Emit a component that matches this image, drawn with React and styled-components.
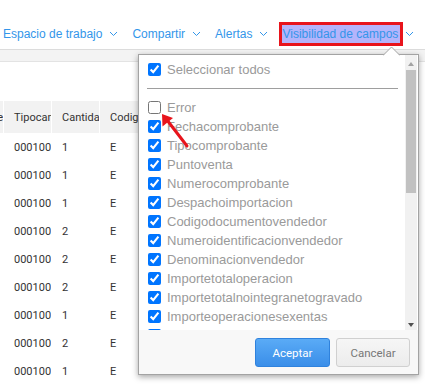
import React from 'react';
import styled, { createGlobalStyle } from 'styled-components';

const GlobalStyle = createGlobalStyle`
  body {
    margin: 0;
    background: #fff;
    font-family: Roboto, "Liberation Sans", sans-serif;
  }
`;

const navItems = ['Espacio de trabajo', 'Compartir', 'Alertas', 'Visibilidad de campos'];

const rows = [1, 1, 1, 2, 2, 2, 1, 2, 1];

const fields = [
    'Fechacomprobante',
    'Tipocomprobante',
    'Puntoventa',
    'Numerocomprobante',
    'Despachoimportacion',
    'Codigodocumentovendedor',
    'Numeroidentificacionvendedor',
    'Denominacionvendedor',
    'Importetotaloperacion',
    'Importetotalnointegranetogravado',
    'Importeoperacionesexentas',
    'Importepercepcionesiva',
    'Importepercepcionesnacionales',
    'Importepercepcionesiibb',
];

function Chevron() {
    return (
        <ChevronIcon width="9" height="6" viewBox="0 0 9 6">
            <path d="M1 1 L4.5 4.5 L8 1" fill="none" stroke="currentColor" strokeWidth="1" />
        </ChevronIcon>
    );
}

function App() {
    return (
        <Page>
            <GlobalStyle />
            <TopNav>
                {navItems.map((item, i) => (
                    <NavItem key={item}>
                        <NavText $active={i === navItems.length - 1}>{item}</NavText>
                        <Chevron />
                    </NavItem>
                ))}
            </TopNav>
            <ToolBand />
            <Blank />
            <Grid>
                <HeaderRow>
                    <HeadCell $edge><span>Numerocomprobante</span></HeadCell>
                    <HeadCell>Tipocambio</HeadCell>
                    <HeadCell>Cantidad</HeadCell>
                    <HeadCell>Codigomoneda</HeadCell>
                </HeaderRow>
                {rows.map((qty, i) => (
                    <DataRow key={i}>
                        <Cell />
                        <Cell>000100</Cell>
                        <Cell>{qty}</Cell>
                        <Cell>E</Cell>
                    </DataRow>
                ))}
            </Grid>

            <Popup>
                <Caret width="17" height="10" viewBox="0 0 17 10">
                    <path d="M0 9.5 L8.5 1 L17 9.5" fill="#fff" stroke="#a3a3a3" strokeWidth="1" />
                </Caret>
                <ListWrap>
                    <FieldList>
                        <FieldRow>
                            <input type="checkbox" defaultChecked />
                            <FieldLabel>Seleccionar todos</FieldLabel>
                        </FieldRow>
                        <Divider />
                        <FieldRow>
                            <input type="checkbox" />
                            <FieldLabel>Error</FieldLabel>
                        </FieldRow>
                        {fields.map((f) => (
                            <FieldRow key={f}>
                                <input type="checkbox" defaultChecked />
                                <FieldLabel>{f}</FieldLabel>
                            </FieldRow>
                        ))}
                    </FieldList>
                    <ScrollBar>
                        <ScrollArrow $dir="up" />
                        <ScrollTrack>
                            <ScrollThumb />
                        </ScrollTrack>
                        <ScrollArrow $dir="down" />
                    </ScrollBar>
                </ListWrap>
                <Footer>
                    <Button $primary>Aceptar</Button>
                    <Button>Cancelar</Button>
                </Footer>
            </Popup>

            <Pointer width="40" height="40" viewBox="0 0 40 40">
                <line x1="7" y1="7" x2="27" y2="33" stroke="#e8141c" strokeWidth="3" strokeLinecap="round" />
                <polygon points="2,1 2.5,13.5 13,5" fill="#e8141c" />
            </Pointer>
        </Page>
    );
}

export default App;

const Page = styled.div`
    position: relative;
    width: 425px;
    height: 387px;
    overflow: hidden;
`;

const TopNav = styled.div`
    display: flex;
    align-items: center;
    height: 50px;
    padding: 22px 0 4px 3px;
    box-sizing: border-box;
    border-bottom: 1px solid #dcdcdc;
`;

const NavItem = styled.div`
    display: flex;
    align-items: center;
    margin-right: 14px;
    color: #3396ea;
    font-family: "Liberation Sans", Arial, sans-serif;
    font-size: 12px;
`;

const NavText = styled.span`
    display: inline-block;
    height: 18px;
    line-height: 18px;
    white-space: nowrap;
    ${({ $active }) => $active && `
        background: #b4b4fb;
        outline: 3px solid #e8141c;
        padding-right: 2px;
        margin-right: -2px;
    `}
`;

const ChevronIcon = styled.svg`
    display: block;
    margin-left: 7px;
    margin-top: 1px;
`;

const ToolBand = styled.div`
    height: 11px;
    background: #f3f3f3;
    border-bottom: 1px solid #e3e3e3;
`;

const Blank = styled.div`
    height: 39px;
`;

const Grid = styled.div`
    font-family: Roboto, "Liberation Sans", sans-serif;
    font-size: 11px;
    color: #333;
`;

const HeaderRow = styled.div`
    display: grid;
    grid-template-columns: 3px repeat(8, 47px);
    column-gap: 1px;
    height: 32px;
    background: #fff;
`;

const HeadCell = styled.div`
    display: flex;
    align-items: center;
    justify-content: ${({ $edge }) => ($edge ? 'flex-end' : 'flex-start')};
    padding-left: ${({ $edge }) => ($edge ? '0' : '10px')};
    background: #f2f2f2;
    overflow: hidden;
    white-space: nowrap;
`;

const DataRow = styled.div`
    display: grid;
    grid-template-columns: 3px repeat(8, 47px);
    column-gap: 1px;
    height: 28px;
`;

const Cell = styled.div`
    display: flex;
    align-items: center;
    padding-left: 10px;
    overflow: hidden;
    white-space: nowrap;
    &:first-child {
        padding-left: 0;
    }
`;

const Popup = styled.div`
    position: absolute;
    left: 138px;
    top: 54px;
    width: 281px;
    height: 321px;
    box-sizing: border-box;
    display: flex;
    flex-direction: column;
    background: #fff;
    border: 1px solid #a3a3a3;
    box-shadow: 0 2px 6px rgba(0, 0, 0, 0.35);
`;

const Caret = styled.svg`
    position: absolute;
    top: -9px;
    left: 244px;
    display: block;
`;

const ListWrap = styled.div`
    flex: 1;
    display: flex;
    min-height: 0;
`;

const FieldList = styled.div`
    flex: 1;
    overflow: hidden;
    padding: 5px 0 0 5px;
`;

const ScrollBar = styled.div`
    width: 12px;
    margin-right: 1px;
    display: flex;
    flex-direction: column;
    background: #f1f1f1;
`;

const ScrollArrow = styled.div`
    height: 14px;
    display: flex;
    justify-content: center;
    align-items: ${({ $dir }) => ($dir === 'up' ? 'center' : 'flex-end')};
    padding-bottom: ${({ $dir }) => ($dir === 'up' ? '0' : '3px')};
    box-sizing: border-box;

    &::after {
        content: '';
        border-left: 3.5px solid transparent;
        border-right: 3.5px solid transparent;
        ${({ $dir }) =>
            $dir === 'up'
                ? 'border-bottom: 4px solid #a3a3a3; margin-top: 3px;'
                : 'border-top: 4px solid #505050;'}
    }
`;

const ScrollTrack = styled.div`
    flex: 1;
    padding: 1px 1px 0;
`;

const ScrollThumb = styled.div`
    height: 123px;
    background: #c1c1c1;
`;

const FieldRow = styled.label`
    display: flex;
    align-items: center;
    height: 19px;

    input {
        margin: 3px 3px 3px 4px;
        width: 13px;
        height: 13px;
    }
`;

const FieldLabel = styled.span`
    margin-left: 3px;
    font-family: "Liberation Sans", Arial, sans-serif;
    font-size: 13px;
    color: #9a9a9a;
    white-space: nowrap;
`;

const Divider = styled.div`
    height: 1px;
    background: #9e9e9e;
    margin: 9px 7px 9px 3px;
`;

const Footer = styled.div`
    display: flex;
    justify-content: flex-end;
    align-items: flex-start;
    gap: 6px;
    height: 44px;
    box-sizing: border-box;
    padding: 8px 8px 0;
    background: #f8f8f8;
`;

const Button = styled.button`
    width: ${({ $primary }) => ($primary ? '75px' : '74px')};
    height: 29px;
    border-radius: 3px;
    font-family: Roboto, "Liberation Sans", sans-serif;
    font-size: 11.5px;
    border: 1px solid ${({ $primary }) => ($primary ? '#2f82dd' : '#d0d0d0')};
    background: ${({ $primary }) =>
        $primary ? 'linear-gradient(#5aabf6, #3a8ee9)' : 'linear-gradient(#f6f6f6, #ececec)'};
    color: ${({ $primary }) => ($primary ? '#fff' : '#777')};
`;

const Pointer = styled.svg`
    position: absolute;
    left: 160px;
    top: 113px;
    display: block;
`;
